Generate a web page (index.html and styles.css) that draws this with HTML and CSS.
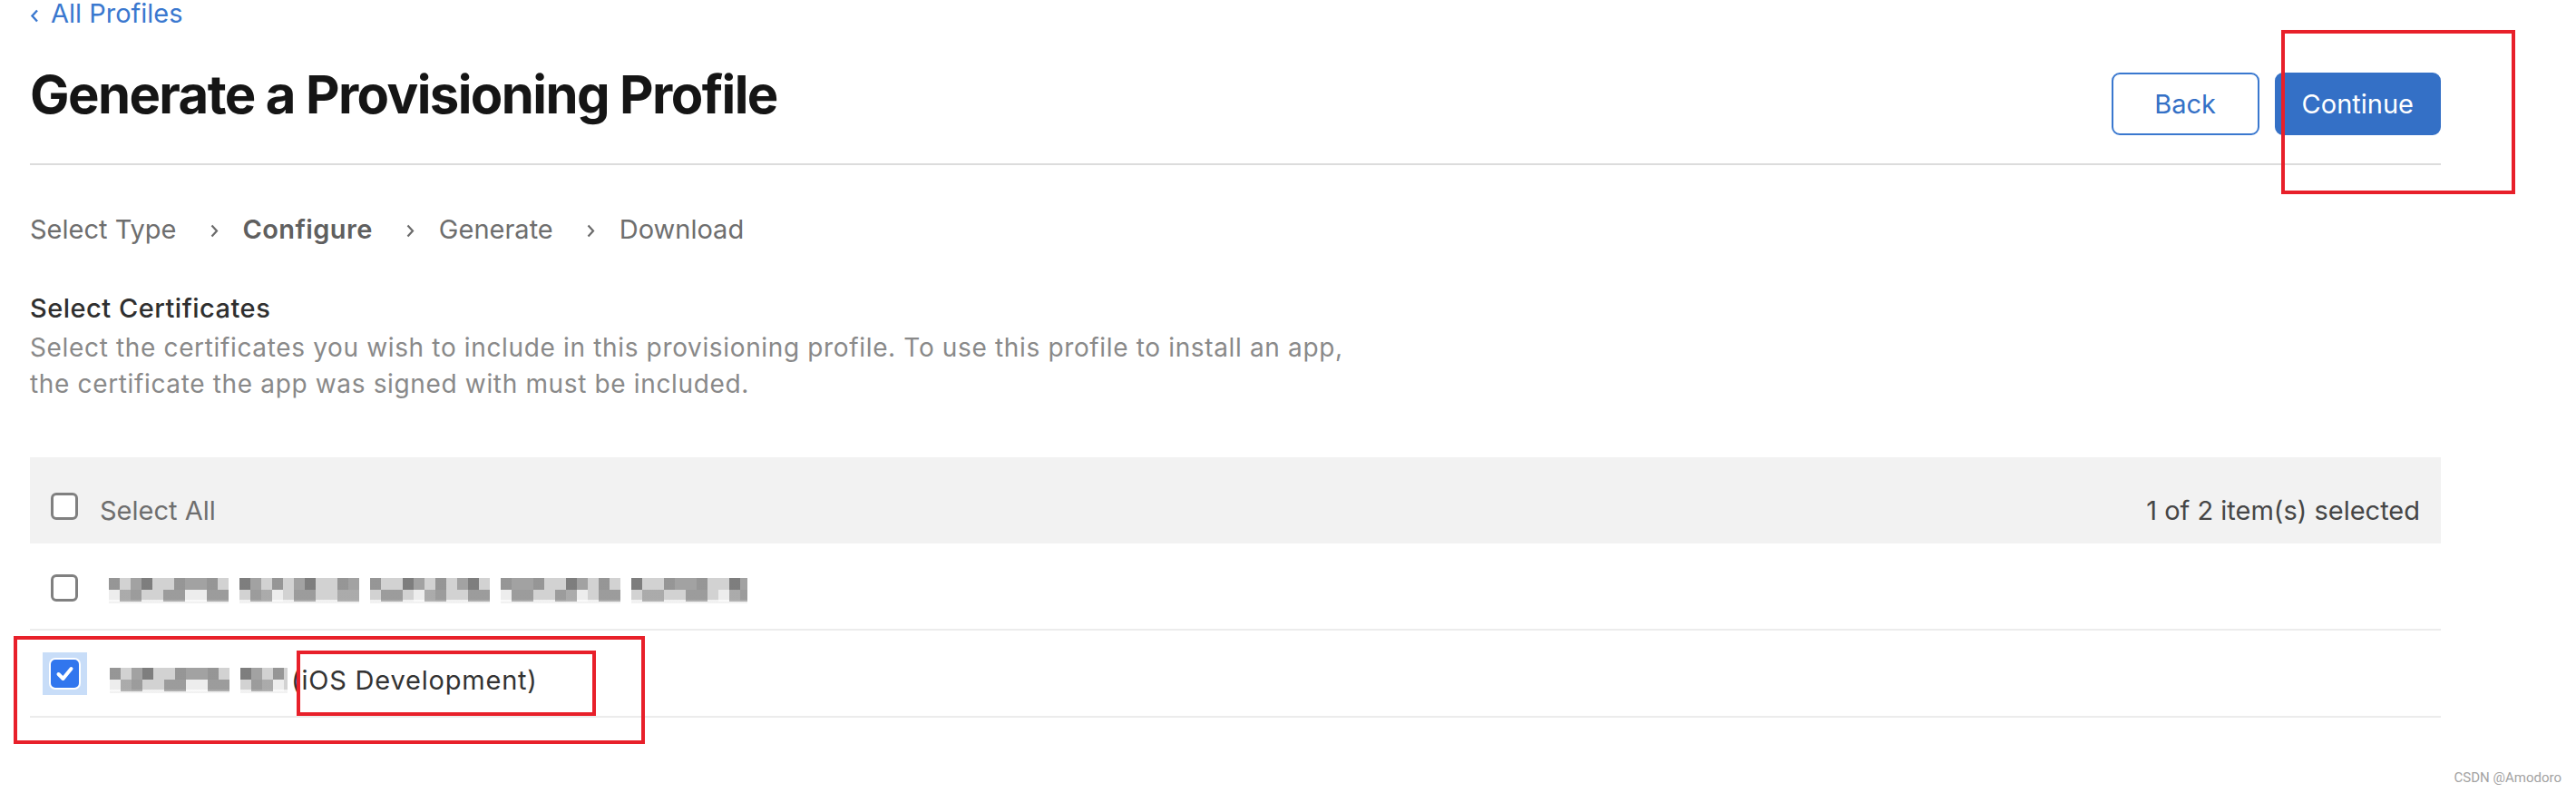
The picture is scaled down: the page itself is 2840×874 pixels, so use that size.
FILE: index.html
```html
<!DOCTYPE html>
<html lang="en">
<head>
    <meta charset="UTF-8">
    <meta name="viewport" content="width=device-width, initial-scale=1.0">
    <title>Generate a Provisioning Profile</title>
    <link rel="stylesheet" href="styles.css">
</head>
<body>
    <div class="page">
        <a class="back-link" href="#">
            <svg width="10" height="15" viewBox="0 0 10 15"><path d="M8 1.5 L2.5 7.5 L8 13.5" /></svg>
            All Profiles
        </a>

        <header class="page-header">
            <h1>Generate a Provisioning Profile</h1>
            <div class="actions">
                <button class="btn btn-outline">Back</button>
                <button class="btn btn-primary">Continue</button>
            </div>
        </header>

        <nav class="steps">
            <span class="step">Select Type</span>
            <svg class="step-arrow" width="9" height="15" viewBox="0 0 9 15"><path d="M1.5 1.5 L7 7.5 L1.5 13.5" /></svg>
            <span class="step current">Configure</span>
            <svg class="step-arrow" width="9" height="15" viewBox="0 0 9 15"><path d="M1.5 1.5 L7 7.5 L1.5 13.5" /></svg>
            <span class="step">Generate</span>
            <svg class="step-arrow" width="9" height="15" viewBox="0 0 9 15"><path d="M1.5 1.5 L7 7.5 L1.5 13.5" /></svg>
            <span class="step">Download</span>
        </nav>

        <section class="certs">
            <h2>Select Certificates</h2>
            <p class="hint">Select the certificates you wish to include in this provisioning profile. To use this profile to install an app,<br>the certificate the app was signed with must be included.</p>

            <div class="cert-table">
                <div class="cert-head">
                    <label class="select-all"><span class="box"></span><span class="label-text">Select All</span></label>
                    <span class="count">1 of 2 item(s) selected</span>
                </div>
                <div class="cert-row">
                    <span class="box"></span>
                    <span class="mosaic mosaic-long"></span>
                </div>
                <div class="cert-row">
                    <span class="focus-ring">
                        <span class="box checked">
                            <svg width="25" height="25" viewBox="0 0 25 25"><path d="M5.5 13 L10.5 18 L19.5 7" /></svg>
                        </span>
                    </span>
                    <span class="mosaic mosaic-short"></span>
                    <span class="cert-type">(iOS Development)</span>
                </div>
            </div>
        </section>
    </div>

    <!-- review marks drawn over the page -->
    <div class="mark mark-continue"></div>
    <div class="mark mark-row"></div>
    <div class="mark mark-type"></div>

    <div class="watermark">CSDN @Amodoro</div>
</body>
</html>
```

FILE: styles.css
```css
:root {
    --apple-blue: #3470c6;
    --link-blue: #3a78cf;
    --text-dark: #151515;
    --text-gray: #6e6e6e;
    --line: #dcdcdc;
    --mark-red: #e8202a;
}

body {
    margin: 0;
    background: #fff;
    font-family: "Inter", "Liberation Sans", sans-serif;
    color: var(--text-dark);
    min-height: 874px;
    position: relative;
}

.page {
    width: 2658px;
    padding-left: 33px;
}

/* back link */
.back-link {
    display: flex;
    align-items: center;
    height: 30px;
    font-size: 29px;
    line-height: 30px;
    color: var(--link-blue);
    text-decoration: none;
}

.back-link svg {
    margin: 4px 13px 0 0;
    fill: none;
    stroke: var(--link-blue);
    stroke-width: 2.4;
}

/* title row */
.page-header {
    display: flex;
    justify-content: space-between;
    align-items: flex-start;
    padding-bottom: 31px;
    border-bottom: 2px solid var(--line);
}

.page-header h1 {
    margin: 39px 0 0;
    font-size: 58px;
    line-height: 70px;
    font-weight: 700;
    letter-spacing: -1.6px;
}

.actions {
    display: flex;
    gap: 17px;
    margin-top: 50px;
}

.btn {
    height: 69px;
    min-width: 163px;
    padding: 0 28px;
    border-radius: 9px;
    font-family: inherit;
    font-size: 29px;
    cursor: pointer;
}

.btn-outline {
    background: #fff;
    border: 2px solid var(--link-blue);
    color: var(--apple-blue);
}

.btn-primary {
    background: var(--apple-blue);
    border: 2px solid var(--apple-blue);
    color: #fff;
}

/* steps */
.steps {
    display: flex;
    align-items: center;
    margin-top: 53px;
    font-size: 29px;
    line-height: 36px;
    color: var(--text-gray);
}

.step.current {
    font-weight: 600;
    letter-spacing: 0.4px;
    color: #5f5f5f;
}

.step-arrow {
    margin: 2px 27px 0 37px;
    fill: none;
    stroke: #6a6a6a;
    stroke-width: 2.2;
}

/* certificates */
.certs h2 {
    margin: 51px 0 0;
    font-size: 29px;
    line-height: 36px;
    font-weight: 500;
    letter-spacing: 0.5px;
    color: #2f2f2f;
}

.hint {
    margin: 5px 0 0;
    font-size: 28px;
    line-height: 40px;
    letter-spacing: 0.65px;
    color: #898989;
}

.cert-table {
    margin-top: 61px;
}

.cert-head {
    display: flex;
    justify-content: space-between;
    align-items: center;
    box-sizing: border-box;
    height: 95px;
    padding: 12px 23px 0;
    background: #f2f2f2;
    font-size: 29px;
}

.select-all {
    display: flex;
    align-items: center;
    gap: 24px;
    color: var(--text-gray);
}

.label-text,
.count {
    padding-top: 9px;
}

.count {
    color: #464646;
}

.cert-row {
    display: flex;
    align-items: center;
    height: 94px;
    padding: 0 23px;
    border-bottom: 2px solid #ececec;
    gap: 34px;
}

.box {
    display: block;
    box-sizing: border-box;
    width: 30px;
    height: 30px;
    border: 3px solid #808080;
    border-radius: 6px;
    background: #fff;
}

.cert-row > .box {
    margin-top: 4px;
}

.focus-ring {
    display: block;
    padding: 8px 9px;
    margin: 0 -9px;
    background: #c8ddf8;
}

.box.checked {
    width: 31px;
    height: 31px;
    border-color: #3176ee;
    background: #3176ee;
    border-radius: 5px;
    box-shadow: 0 0 0 2px #fff;
}

.box.checked svg {
    display: block;
    margin: 0;
    fill: none;
    stroke: #fff;
    stroke-width: 4;
    stroke-linecap: round;
    stroke-linejoin: round;
}

/* names hidden behind a pixel mosaic */
.mosaic {
    display: block;
    height: 28px;
    background-color: #d2d2d2;
    background-image:
        repeating-linear-gradient(90deg, transparent 0 132px, #fff 132px 144px),
        repeating-linear-gradient(90deg, rgba(90,90,90,.5) 0 12px, transparent 12px 36px),
        repeating-linear-gradient(90deg, transparent 0 24px, rgba(90,90,90,.4) 24px 48px, transparent 48px 60px),
        repeating-linear-gradient(90deg, transparent 0 12px, rgba(90,90,90,.45) 12px 36px, transparent 36px 48px),
        repeating-linear-gradient(90deg, rgba(255,255,255,.6) 0 24px, transparent 24px 84px),
        linear-gradient(180deg, transparent 0 24px, rgba(255,255,255,.7) 24px);
    background-size: 100% 28px, 100% 13px, 100% 13px, 100% 13px, 100% 13px, 100% 28px;
    background-position: 0 0, 0 0, 0 0, 0 13px, 0 13px, 0 0;
    background-repeat: no-repeat;
    filter: blur(0.6px);
}

.mosaic-long {
    width: 704px;
    margin-top: 10px;
}

.mosaic-short {
    width: 196px;
    margin-top: 16px;
}

.cert-type {
    margin-left: -30px;
    padding-top: 15px;
    font-size: 29px;
    letter-spacing: 0.8px;
    color: #333;
}

/* red review marks */
.mark {
    position: absolute;
    border: 4px solid var(--mark-red);
}

.mark-continue {
    left: 2515px;
    top: 33px;
    width: 250px;
    height: 173px;
}

.mark-row {
    left: 15px;
    top: 701px;
    width: 688px;
    height: 111px;
}

.mark-type {
    left: 327px;
    top: 717px;
    width: 322px;
    height: 64px;
}

.watermark {
    position: absolute;
    right: 16px;
    bottom: 8px;
    font-family: "Liberation Sans Narrow", "Roboto", sans-serif;
    font-size: 15px;
    color: #a3a3a3;
}
```
